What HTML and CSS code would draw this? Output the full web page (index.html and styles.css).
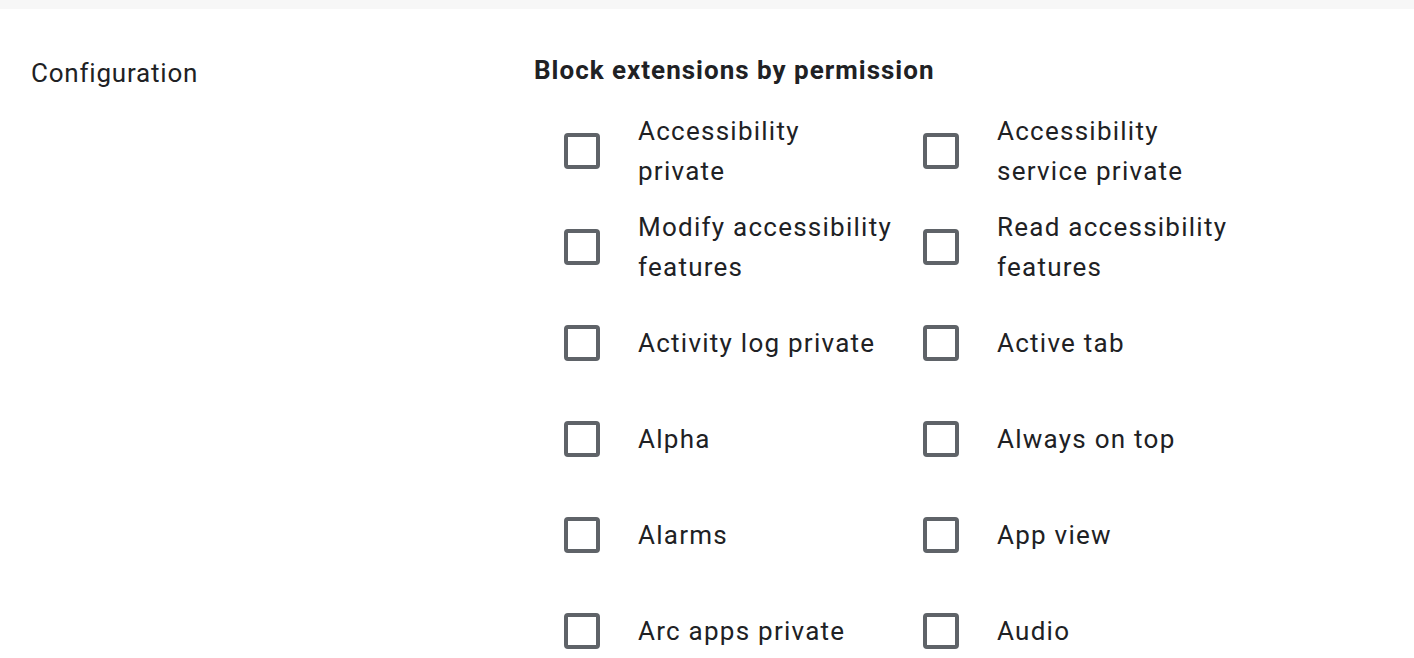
FILE: index.html
```
<!DOCTYPE html>
<html>
<head>
  <meta charset="UTF-8">
  <title>Block extensions by permission</title>
  <link rel="stylesheet" href="styles.css">
</head>
<body>
  <div class="topstrip"></div>
  <div class="section">
    <div class="section_label">Configuration</div>
    <div class="section_body">
      <h2 class="heading">Block extensions by permission</h2>
      <div class="perm_grid">
        <label class="perm"><span class="box"></span><span class="perm_text">Accessibility<br>private</span></label>
        <label class="perm"><span class="box"></span><span class="perm_text">Accessibility service private</span></label>
        <label class="perm"><span class="box"></span><span class="perm_text">Modify accessibility features</span></label>
        <label class="perm"><span class="box"></span><span class="perm_text">Read accessibility features</span></label>
        <label class="perm"><span class="box"></span><span class="perm_text">Activity log private</span></label>
        <label class="perm"><span class="box"></span><span class="perm_text">Active tab</span></label>
        <label class="perm"><span class="box"></span><span class="perm_text">Alpha</span></label>
        <label class="perm"><span class="box"></span><span class="perm_text">Always on top</span></label>
        <label class="perm"><span class="box"></span><span class="perm_text">Alarms</span></label>
        <label class="perm"><span class="box"></span><span class="perm_text">App view</span></label>
        <label class="perm"><span class="box"></span><span class="perm_text">Arc apps private</span></label>
        <label class="perm"><span class="box"></span><span class="perm_text">Audio</span></label>
      </div>
    </div>
  </div>
</body>
</html>
```

FILE: styles.css
```
*{
  margin:0;
  padding:0;
  box-sizing:border-box;
}
body{
  background:#fff;
  font-family:Roboto, "Noto Sans", sans-serif;
  color:#202124;
  overflow:hidden;
}
.topstrip{
  height:9px;
  background:#f7f7f7;
}
.section{
  display:grid;
  grid-template-columns:503px 1fr;
  padding:41px 0 0 31px;
}
.section_label{
  font-size:26px;
  line-height:40px;
  letter-spacing:0.8px;
  margin-top:3px;
}
.heading{
  font-size:26px;
  font-weight:700;
  line-height:40px;
  letter-spacing:1px;
}
.perm_grid{
  display:grid;
  grid-template-columns:359px 360px;
  grid-auto-rows:96px;
  padding:13px 0 0 30px;
}
.perm{
  display:flex;
  align-items:center;
  gap:38px;
}
.box{
  flex:none;
  width:36px;
  height:36px;
  border:4px solid #5f6368;
  border-radius:4px;
}
.perm_text{
  width:258px;
  font-size:26px;
  line-height:40px;
  letter-spacing:1.25px;
}
```
